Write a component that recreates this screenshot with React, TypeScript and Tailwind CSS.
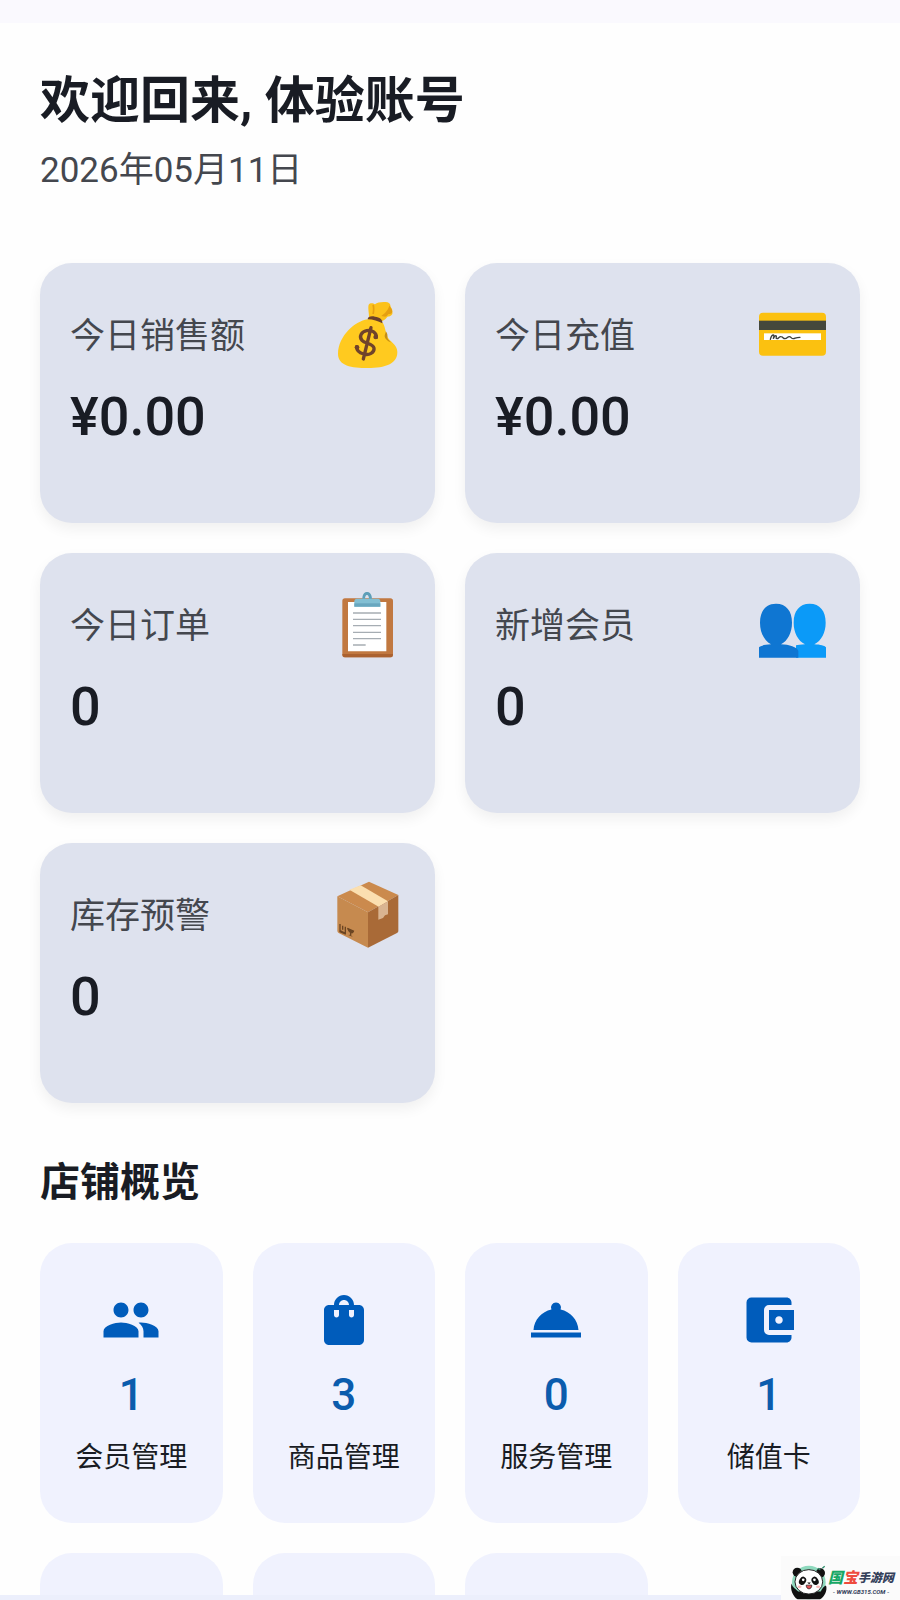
import React from "react";
import {
  MdAccountBalanceWallet,
  MdPeople,
  MdRoomService,
  MdShoppingBag,
} from "react-icons/md";

const MoneyBag = () => (
  <svg viewBox="33 54 222 222" className="w-[74px] h-[74px]" aria-hidden="true">
    <path
      d="M146 74c4-6 14-5 19-1 6-6 20-8 32-7 8 0 14 4 14 10 0 6 6 10 6 16 0 5 2 10-3 14-4 5-10 2-13 6-4 5-8 9-14 11l-40-9c1-12-4-30-1-40z"
      fill="#fcc21b"
    />
    <path
      d="M162 74c2 8 2 18 0 28h-5c2-10 2-18 0-27zM208 76c-2 12-12 24-24 32l12 2c8-2 6-8 12-8 8 0 10-5 8-11-1-5-5-8-8-15z"
      fill="#e59f10"
    />
    <path
      d="M143 118c-20 3-42 16-58 33-18 19-31 44-31 70 0 36 40 43 90 43 52 0 88-12 88-48 0-24-24-30-31-48-6-18-7-38-17-43-10-6-26-10-41-7z"
      fill="#ffca1f"
    />
    <path d="M197 154c6 6 6 14 5 20 3 6 8 10 12 14-10-4-20-12-20-20 0-6 4-8 3-14z" fill="#c58e16" />
    <path d="M143 118c0-8 10-11 22-8 14 2 24 8 22 20-12-7-28-12-44-12z" fill="#6b402b" />
    <path
      d="M169 172c1-14-13-23-29-20-16 3-24 18-14 29 9 10 33 9 36 23 2 14-15 23-31 18-14-4-21-11-21-22M153 143l-23 94"
      fill="none"
      stroke="#70432b"
      strokeWidth="10"
      strokeLinecap="round"
    />
    <circle cx="167" cy="171" r="7" fill="#70432b" />
    <circle cx="111" cy="202" r="7" fill="#70432b" />
  </svg>
);

const CreditCard = () => (
  <svg viewBox="48 54 222 222" className="w-[74px] h-[74px]" aria-hidden="true">
    <rect x="57" y="98" width="201" height="129" rx="12" fill="#fbc110" />
    <rect x="57" y="122" width="201" height="28" fill="#45483c" />
    <rect x="72" y="160" width="171" height="20" fill="#fff" />
    <path
      d="M91 178c2-8 5-13 9-13 4 1 0 8 0 11 3-8 7-11 9-8 1 4-3 8 2 8 5 0 6-7 12-6 6 0 6 6 12 6 7 0 7-6 13-6 6 0 5 6 12 6 6 0 6-4 20-4"
      fill="none"
      stroke="#3c3f3c"
      strokeWidth="4"
      strokeLinecap="round"
    />
  </svg>
);

const Clipboard = () => (
  <svg viewBox="33 54 222 222" className="w-[74px] h-[74px]" aria-hidden="true">
    <rect x="67" y="85" width="152" height="177" rx="8" fill="#c17840" />
    <path d="M67 252c0 6 3 10 8 10h136c5 0 8-4 8-10z" fill="#ab6230" />
    <path d="M84 96h115v148H84z" fill="#fff" />
    <path
      d="M99 129h84M99 148h84M99 167h84M99 187h84M99 206h84M99 225h38"
      stroke="#a6adb3"
      strokeWidth="4"
    />
    <path d="M127 88c0-14 5-22 14-22s15 8 15 22h-9c0-8-2-13-6-13s-6 5-6 13z" fill="#5d9fb8" />
    <path d="M110 86h64c4 0 7 3 7 8v16h-78V94c0-5 3-8 7-8z" fill="#82bfd3" />
    <path d="M103 100h78v10h-78z" fill="#68a7bf" />
  </svg>
);

const Members = () => (
  <svg viewBox="48 54 222 222" className="w-[74px] h-[74px]" aria-hidden="true">
    <path
      d="M209 101c31 0 48 22 48 57 0 30-13 54-34 65 18 1 31 4 35 9v31h-90v-37c5-1 15-2 27-3-21-11-34-35-34-65 0-35 17-57 48-57z"
      fill="#0b9af8"
    />
    <path
      d="M108 101c31 0 48 22 48 57 0 30-13 54-33 65 24 1 49 8 52 20v20H57v-31c4-5 17-8 36-9-20-11-33-35-33-65 0-35 17-57 48-57z"
      fill="#0f76d2"
    />
  </svg>
);

const Package = () => (
  <svg viewBox="33 54 222 222" className="w-[74px] h-[74px]" aria-hidden="true">
    <path d="M147 65l88 40-91 52-92-48z" fill="#cb8a4d" />
    <path d="M52 109l92 48v106l-88-44c-3-2-4-4-4-8z" fill="#c68a4f" />
    <path d="M235 105l-91 52v106l87-44c3-2 4-4 4-7z" fill="#a96a37" />
    <path d="M88 89l34-13 82 48-28 16z" fill="#fbdfb0" />
    <path d="M175 140l29-16v39l-9 3-6 8-14 5z" fill="#d9b491" />
    <path
      d="M60 192v20l16 8v-20M68 197v12M58 214l18 8M82 205l20 9"
      fill="none"
      stroke="#6b4522"
      strokeWidth="4"
    />
    <path d="M82 205l20 9c-2 6-5 7-8 6v7l5 4-14-6 5-1v-6c-4-2-7-6-8-13z" fill="#6b4522" />
  </svg>
);

const Panda = () => (
  <svg viewBox="84 64 116 106" className="w-[39px] h-[35px]" aria-hidden="true">
    <circle cx="143" cy="117" r="51" fill="#8ed9bd" />
    <circle cx="108" cy="86" r="14" fill="#111" />
    <circle cx="178" cy="88" r="14" fill="#111" />
    <path d="M91 120c2 12 14 18 20 24h68c5-10 10-16 16-18 5 14-4 34-18 42h-68c-14-8-24-32-18-48z" fill="#111" />
    <ellipse cx="143" cy="115" rx="42" ry="37" fill="#fff" stroke="#222" strokeWidth="3" />
    <ellipse cx="124" cy="112" rx="10" ry="13" fill="#111" transform="rotate(30 124 112)" />
    <ellipse cx="162" cy="112" rx="10" ry="13" fill="#111" transform="rotate(-30 162 112)" />
    <circle cx="126" cy="109" r="4" fill="#fff" />
    <circle cx="160" cy="109" r="4" fill="#fff" />
    <path d="M138 117h11l-5 5z" fill="#111" />
    <path d="M135 125h17c0 15-17 15-17 0z" fill="#e4545a" stroke="#111" strokeWidth="2" />
    <ellipse cx="115" cy="130" rx="6" ry="4" fill="#f9b7b7" />
    <ellipse cx="171" cy="130" rx="6" ry="4" fill="#f9b7b7" />
    <path d="M170 74l8 5M184 74l7-6" stroke="#2a8a68" strokeWidth="4" />
  </svg>
);

const stats = [
  { label: "今日销售额", value: "¥0.00", icon: <MoneyBag /> },
  { label: "今日充值", value: "¥0.00", icon: <CreditCard /> },
  { label: "今日订单", value: "0", icon: <Clipboard /> },
  { label: "新增会员", value: "0", icon: <Members /> },
  { label: "库存预警", value: "0", icon: <Package /> },
];

const shortcuts = [
  { label: "会员管理", value: 1, Icon: MdPeople },
  { label: "商品管理", value: 3, Icon: MdShoppingBag },
  { label: "服务管理", value: 0, Icon: MdRoomService },
  { label: "储值卡", value: 1, Icon: MdAccountBalanceWallet },
];

const App = () => {
  return (
    <div className="relative h-screen flex flex-col overflow-hidden bg-[#fefefe] font-[Roboto,'Noto_Sans_CJK_SC',sans-serif] text-[#191c24]">
      <div className="h-[23px] shrink-0 bg-[#faf9fe]" />
      <main className="flex-1 min-h-0 overflow-hidden px-10 pt-[42px]">
        <h1 className="text-[50px] leading-[72px] font-bold">
          欢迎回来, 体验账号
        </h1>
        <p className="mt-2 text-[35px] leading-[52px] text-[#44474e]">
          2026年05月11日
        </p>

        <section className="mt-[66px] grid grid-cols-2 gap-[30px]">
          {stats.map(({ label, value, icon }) => (
            <div
              key={label}
              className="h-[260px] rounded-[32px] bg-[#dee2ee] px-[30px] pt-[35px] shadow-[0_6px_14px_rgba(0,0,0,0.06)]"
            >
              <div className="flex items-center justify-between">
                <span className="pt-1 text-[35px] text-[#44474e]">
                  {label}
                </span>
                {icon}
              </div>
              <div className="mt-[13px] text-[54px] leading-[64px] font-medium">
                {value}
              </div>
            </div>
          ))}
        </section>

        <h2 className="mt-[50px] text-[40px] leading-[60px] font-bold">
          店铺概览
        </h2>
        <section className="mt-[30px] grid grid-cols-4 gap-[30px]">
          {shortcuts.map(({ label, value, Icon }) => (
            <button
              key={label}
              type="button"
              className="h-[280px] rounded-[32px] bg-[#f0f2fe] pt-[47px] flex flex-col items-center justify-start"
            >
              <Icon className="w-[60px] h-[60px] text-[#005cbb]" />
              <span className="mt-[17px] text-[44px] leading-[56px] font-medium text-[#0b5cad]">
                {value}
              </span>
              <span className="mt-[13px] text-[28px] leading-[44px]">
                {label}
              </span>
            </button>
          ))}
          <div className="h-[280px] rounded-[32px] bg-[#f0f2fe]" />
          <div className="h-[280px] rounded-[32px] bg-[#f0f2fe]" />
          <div className="h-[280px] rounded-[32px] bg-[#f0f2fe]" />
        </section>
      </main>
      <div className="h-[5px] shrink-0 bg-[#eceffc]" />

      <div className="absolute right-0 bottom-0 h-11 pl-2 pr-[6px] flex items-end bg-[#fbfbfb]">
        <Panda />
        <div className="pb-1 flex flex-col items-center">
          <div className="flex items-center italic font-black text-[12px] leading-[20px] text-[#34405a]">
            <span className="text-[15px] text-[#17a865]">国</span>
            <span className="text-[15px] text-[#ee4b3e]">宝</span>
            <span>手游网</span>
          </div>
          <span className="italic font-bold text-[6px] leading-[8px] text-[#34405a]">
            - WWW.GB315.COM -
          </span>
        </div>
      </div>
    </div>
  );
};

export default App;
